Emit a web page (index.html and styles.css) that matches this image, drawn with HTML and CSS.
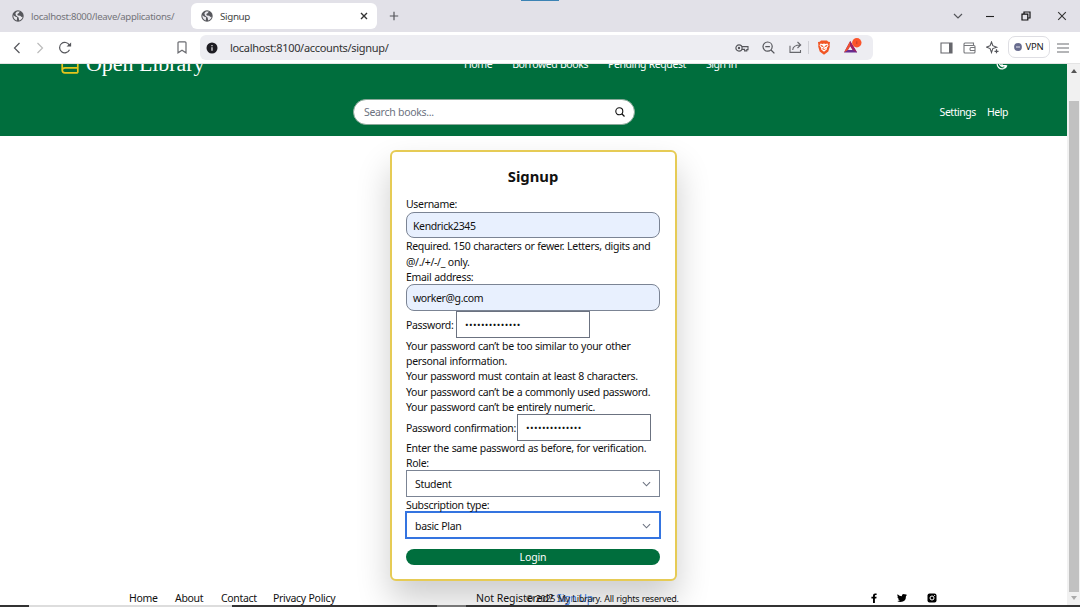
FILE: index.html
```html
<!DOCTYPE html>
<html lang="en">
<head>
<meta charset="utf-8">
<title>Signup</title>
<link rel="stylesheet" href="styles.css">
</head>
<body>
<svg class="defs" width="0" height="0"><defs>
  <symbol id="globe" viewBox="0 0 12 12"><circle cx="6" cy="6" r="5.7" fill="#56575c"/><path d="M1.3 5.2 3.5 6.8 5.1 7.2 4.8 10.4C2.8 9.8 1.3 8 1.3 5.2ZM5 1.4 7.8 1.5 6.9 3 5.2 3.9 5.9 5.4 8.2 5.8 9.6 7.1 10.6 6.8C10.3 9 8.7 10.2 7.2 10.4L6.6 7.4 4 5.5 3.4 3.2Z" fill="#e8e7ec"/></symbol>
  <symbol id="chevron" viewBox="0 0 10 6"><path d="m1 1 4 4 4-4" fill="none" stroke="currentColor" stroke-width="1.2"/></symbol>
</defs></svg>
<div class="browser">
  <div class="tabs">
    <div class="tab"><svg class="globe"><use href="#globe"/></svg><span class="tab-muted">localhost:8000/leave/applications/</span></div>
    <div class="tab tab-active"><svg class="globe"><use href="#globe"/></svg><span class="tab-title">Signup</span>
      <svg class="tab-close" width="8" height="8" viewBox="0 0 8 8"><path d="m1 1 6 6M7 1 1 7" stroke="#333" stroke-width="1.4"/></svg></div>
    <svg class="plus" width="10" height="10" viewBox="0 0 10 10"><path d="M5 .8v8.4M.8 5h8.4" stroke="#55565b" stroke-width="1.2"/></svg>
    <div class="progress"></div>
    <div class="window-buttons">
      <svg width="10" height="6"><use href="#chevron"/></svg>
      <svg width="10" height="10" viewBox="0 0 10 10"><path d="M1 5.5h8" stroke="#222" stroke-width="1.1"/></svg>
      <svg width="10" height="10" viewBox="0 0 10 10"><path d="M1 3.2h5.8V9H1zM3 3V1h6v6H7" fill="none" stroke="#111" stroke-width="1.2"/></svg>
      <svg width="10" height="10" viewBox="0 0 10 10"><path d="m1.2 1.2 7.6 7.6m0-7.6L1.2 8.8" stroke="#333" stroke-width="1.1"/></svg>
    </div>
  </div>
  <div class="toolbar">
    <div class="nav-icons">
      <svg width="8" height="12" viewBox="0 0 8 12"><path d="M6.5 1 1.5 6l5 5" fill="none" stroke="#55565b" stroke-width="1.2"/></svg>
      <svg width="8" height="12" viewBox="0 0 8 12"><path d="m1.5 1 5 5-5 5" fill="none" stroke="#bbb" stroke-width="1.2"/></svg>
      <svg width="14" height="13" viewBox="0 0 14 13"><path d="M11.4 4.2A5.2 5.2 0 1 0 11.5 8.8" fill="none" stroke="#55565b" stroke-width="1.2"/><path d="M8.5 5.5h4.6V1.4z" fill="#55565b"/></svg>
    </div>
    <svg class="bookmark" width="10" height="13" viewBox="0 0 10 13"><path d="M1 1.8Q1 .8 2 .8h6q1 0 1 1v10L5 9.2 1 11.8z" fill="none" stroke="#6a6b70" stroke-width="1.2"/></svg>
    <div class="address">
      <svg width="12" height="12" viewBox="0 0 12 12"><circle cx="6" cy="6" r="5.5" fill="#1d1c22"/><path d="M6 5.3v3.4M6 3v1.3" stroke="#ededf2" stroke-width="1.2"/></svg>
      <span class="url">localhost:8100/accounts/signup/</span>
      <div class="address-actions">
        <svg width="14" height="10" viewBox="0 0 14 10"><circle cx="4" cy="5" r="3.1" fill="none" stroke="#55565b" stroke-width="1.2"/><circle cx="4" cy="5" r="1.2" fill="#55565b"/><path d="M7 3.6h6v3h-1.2v1.3H9.6V6.4H7" fill="none" stroke="#55565b" stroke-width="1.1"/></svg>
        <svg width="13" height="13" viewBox="0 0 13 13"><circle cx="5.6" cy="5.6" r="4.6" fill="none" stroke="#55565b" stroke-width="1.2"/><path d="M3.3 5.6h4.6M9 9l3.4 3.4" stroke="#55565b" stroke-width="1.3"/></svg>
        <svg width="13" height="13" viewBox="0 0 13 13"><path d="M1 4.8v6.6h10.5V9M3.7 9c.2-3.6 2.3-5 7.7-5M8.5 1l3.2 3-3.2 3" fill="none" stroke="#66676c" stroke-width="1.1"/></svg>
        <i class="divider"></i>
        <svg width="14" height="15" viewBox="0 0 14 15"><path d="M4 .6h6l1.2 1.2 1.8.2-.4 3 .2 1.5-1.5 5L7 14.7 2.7 11.5l-1.5-5L1.4 5 1 2l1.8-.2z" fill="#f15625"/><path d="m3.5 3.5 2 .4L7 3.6l1.5.3 2-.4 1 2-1.8 2.7.3 1L7 11.8 4 9.2l.3-1-1.8-2.7z" fill="#fff"/><path d="m3.8 5.2 2 .8-.5 1zm6.4 0-2 .8.5 1zM7 6.4v1.4l-1.5 1L7 9.7l1.5-.9" stroke="#f15625" fill="none" stroke-width=".8"/></svg>
        <svg width="19" height="16" viewBox="0 0 19 16"><path d="M7.2 3 1 14.500h13.100L7.200 3Zm0 5 2.500 4.100H4.900z" fill="#662d91" fill-rule="evenodd"/><path d="M7.200 3 1 14.500l3.900-2.400L7.200 8z" fill="#f05030"/><path d="M7.200 3v5l2.500 4.100 4.400 2.400z" fill="#9e1f63"/><circle cx="13.8" cy="4.8" r="4.7" fill="#fb542b"/><path d="M13.8 3.3v2.8" stroke="#c13d31" stroke-width="1"/></svg>
      </div>
    </div>
    <div class="toolbar-right">
      <svg width="13" height="12" viewBox="0 0 13 12"><path d="M1 1h11v10H1z" fill="none" stroke="#66676c" stroke-width="1.1"/><path d="M9 1h3v10H9z" fill="#66676c"/></svg>
      <svg width="13" height="12" viewBox="0 0 13 12"><path d="M10.5 3.5V1H2Q1 1 1 2v8q0 1 1 1h9q1 0 1-1V4.500q0-1-1-1H1M12 5.500H8q-1 0-1 1.600t1 1.400h4" fill="none" stroke="#77787c" stroke-width="1.1"/></svg>
      <svg width="13" height="13" viewBox="0 0 13 13"><path d="m5.500 1 1.300 3.700 3.900 1.500-3.900 1.400-1.300 3.900-1.400-3.900L.6 6.200l3.500-1.500z" fill="none" stroke="#55565b" stroke-width="1.100"/><path d="M10.500 8.300v4M8.500 10.300h4" stroke="#55565b" stroke-width="1.200"/></svg>
      <div class="vpn"><svg width="8" height="8" viewBox="0 0 8 8"><circle cx="4" cy="4" r="3.900" fill="#686c8e"/><path d="M2 4h4" stroke="#e4e4f0"/></svg><span>VPN</span></div>
      <svg width="12" height="10" viewBox="0 0 12 10"><path d="M0 1h12M0 5h12M0 9h12" stroke="#6b6c70" stroke-width="1.100"/></svg>
    </div>
  </div>
  <div class="viewport">
    <div class="page">
      <header class="header">
        <div class="header-top">
          <svg class="logo" width="18" height="20" viewBox="0 0 18 20"><path d="M16.800 18.800H4Q1.200 18.800 1.200 16V4Q1.200 1.200 4 1.200h12.800v12.600H4Q1.200 13.800 1.200 16.300M16.800 13.800v5" fill="none" stroke="#e5c51d" stroke-width="1.700"/></svg>
          <span class="brand">Open Library</span>
          <nav class="main-nav"><a>Home</a><a>Borrowed Books</a><a>Pending Request</a><a>Sign in</a></nav>
          <svg class="moon" width="12" height="12" viewBox="0 0 12 12"><path d="M4.500 1.200A5 5 0 1 0 10.900 7.500 4.200 4.200 0 0 1 4.500 1.200ZM6 5v2.500h4" fill="none" stroke="#fff" stroke-width="1.200"/></svg>
        </div>
        <div class="header-bottom">
          <div class="search"><span>Search books...</span><svg width="10" height="10" viewBox="0 0 10 10"><circle cx="4.300" cy="4.300" r="3.500" fill="none" stroke="#111" stroke-width="1.100"/><path d="m7 7 2.500 2.500" stroke="#111" stroke-width="1.200"/></svg></div>
          <div class="links"><a>Settings</a><a>Help</a></div>
        </div>
      </header>
      <main class="main">
        <form class="card">
          <h1>Signup</h1>
          <label>Username:</label>
          <div class="field">Kendrick2345</div>
          <p class="hint tall">Required. 150 characters or fewer. Letters, digits and<br>@/./+/-/_ only.</p>
          <label class="low">Email address:</label>
          <div class="field field-email">worker@g.com</div>
          <div class="row"><span class="row-label l1">Password:</span><div class="pass">••••••••••••••</div></div>
          <p class="hint rules">Your password can’t be too similar to your other<br>personal information.<br>Your password must contain at least 8 characters.<br>Your password can’t be a commonly used password.<br>Your password can’t be entirely numeric.</p>
          <div class="row"><span class="row-label l2">Password confirmation:</span><div class="pass">••••••••••••••</div></div>
          <p class="hint">Enter the same password as before, for verification.</p>
          <label class="role">Role:</label>
          <div class="select"><span>Student</span><svg width="9" height="6"><use href="#chevron"/></svg></div>
          <label class="low">Subscription type:</label>
          <div class="select focus"><span>basic Plan</span><svg width="9" height="6"><use href="#chevron"/></svg></div>
          <div class="login">Login</div>
        </form>
      </main>
      <footer class="footer">
        <nav class="foot-nav"><a class="f1">Home</a><a class="f2">About</a><a class="f3">Contact</a><a class="f4">Privacy Policy</a></nav>
        <div class="foot-mid"><span class="register">Not Registered? <a>Sign Up</a></span><span class="copyright">© 2025 My Library. All rights reserved.</span></div>
        <div class="social">
          <svg width="6" height="10" viewBox="0 0 6 10"><path d="M2 10V5.600H.4V3.800H2V2.500Q2 .4 4 .4h1.600v1.700H4.700q-.8 0-.8.800v.9h1.700l-.3 1.800H3.900V10z"/></svg>
          <svg width="10" height="10" viewBox="0 0 10 10"><path d="M.6 1.200q1.800 2 4.200 2Q4.700.9 6.800.9q.8 0 1.400.600L9.700.9 9 2.100l1-.2-1 1.200Q9 9 3.500 9 1.600 9 .2 8.100q1.600 0 2.700-.8-1.500-.2-1.900-1.500h.9Q.4 5.200.4 3.700l.8.200Q-.1 2.600.6 1.200z"/></svg>
          <svg width="10" height="10" viewBox="0 0 10 10"><rect x=".5" y=".5" width="9" height="9" rx="2"/><circle cx="5" cy="5" r="2" fill="none" stroke="#fff"/><circle cx="7.600" cy="2.500" r=".6" fill="#fff"/></svg>
        </div>
      </footer>
    </div>
    <div class="scrollbar"><b class="up"></b><i class="thumb"></i><b class="down"></b></div>
  </div>
  <div class="taskbar"><i></i><i></i><i></i><i></i></div>
</div>
</body>
</html>
```
FILE: styles.css
```css
* { box-sizing: border-box; }
body { margin: 0; font: 10.5px "Noto Sans", "Open Sans", sans-serif; letter-spacing: -.32px; word-spacing: .4px; color: #111; background: #fff; overflow: hidden; }
svg { display: block; flex: none; }
span, a, label { white-space: nowrap; }
.defs { position: absolute; }
.browser { width: 1080px; height: 607px; display: flex; flex-direction: column; }

.tabs { height: 32px; flex: none; background: #e2e1e8; display: flex; align-items: center; position: relative; }
.tab { width: 191px; padding-left: 12px; display: flex; align-items: center; }
.tab-active { width: 186px; height: 26px; padding: 0 9px 0 10px; background: #fff; border-radius: 6px; }
.globe { width: 12px; height: 12px; margin-right: 7px; }
.tab-muted { color: #74747a; font-size: 9.6px; letter-spacing: -.31px; }
.tab-title { font-size: 9.8px; color: #444; letter-spacing: -.35px; }
.tab-close { margin-left: auto; }
.plus { margin-left: 12px; }
.progress { position: absolute; left: 521px; top: 0; width: 38px; height: 1px; background: #3c83b4; }
.window-buttons { margin-left: auto; padding-right: 13px; display: flex; align-items: center; gap: 26px; color: #55565b; }
.window-buttons svg:first-child { margin-right: -4px; }

.toolbar { height: 32px; flex: none; display: flex; align-items: center; border-bottom: 1px solid #e4e4e4; }
.nav-icons { display: flex; align-items: center; gap: 15px; width: 176px; padding-left: 13px; }
.nav-icons svg:last-child { margin-left: -1px; }
.bookmark { margin: 0 14px 0 1px; }
.address { width: 673px; height: 25px; background: #ededf2; border-radius: 6px; padding: 0 11px 0 6px; margin-left: -1px; display: flex; align-items: center; }
.url { margin-left: 12px; font-size: 11px; color: #333; }
.address-actions { margin-left: auto; display: flex; align-items: center; gap: 13.5px; }
.divider { width: 1px; height: 13px; background: #cfcfd5; margin: 0 -6px 0 -7px; }
.address-actions svg:last-child { margin-bottom: 4px; margin-left: -1px; }
.toolbar-right { margin-left: auto; padding-right: 11px; display: flex; align-items: center; gap: 11px; }
.toolbar-right > svg:first-child { margin-right: -1px; }
.toolbar-right > svg:nth-child(3) { margin: 0 -2px 0 -1px; }
.vpn { width: 42px; height: 22px; border: 1px solid #dedee3; border-radius: 7px; display: flex; align-items: center; justify-content: center; gap: 3px; margin: -2px -4px 0 0; font-size: 9.5px; letter-spacing: -.2px; color: #222; }

.viewport { height: 541px; flex: none; display: flex; overflow: hidden; }
.page { width: 1067px; }
.header { height: 90px; margin-top: -18px; background: #006e3d; color: #fff; }
.header-top { height: 36px; margin-bottom: 18px; display: flex; align-items: center; }
.logo { margin: 0 7px 0 61px; }
.brand { width: 378px; font: 22px/26px "Liberation Serif", serif; margin-top: -1px; letter-spacing: -.05px; word-spacing: 0; }
.main-nav { display: flex; width: 532px; gap: 20px; margin-top: -1px; letter-spacing: -.42px; }
.header-bottom { height: 36px; padding: 0 59px 0 353px; display: flex; align-items: flex-start; }
.search { width: 282px; height: 26px; margin-top: -1px; background: #fff; border-radius: 13px; border: 1px solid #8ba99a; color: #6b7280; padding: 0 9px 0 10px; display: flex; align-items: center; justify-content: space-between; }
.links { margin-left: auto; display: flex; gap: 11px; padding-top: 5px; letter-spacing: -.45px; }

.main { height: 445px; padding: 14px 0 0 390px; }
.card { width: 287px; height: 431px; border: 2px solid #e6cb55; border-radius: 6px; padding: 0 15px 0 14px; background: #fff; box-shadow: 0 18px 34px #0003; }
h1 { margin: 0; padding-top: 13px; height: 45px; text-align: center; font-size: 14.8px; line-height: 22px; letter-spacing: 0; }
label { display: block; height: 15px; line-height: 15px; }
.low { line-height: 17px; }
.field { height: 26px; border: 1px solid #7b8494; border-radius: 8px; background: #e8f0fe; padding: 1px 6px 0; line-height: 24px; letter-spacing: -.38px; }
.field-email { height: 27px; }
.hint { margin: 0; line-height: 15.2px; white-space: nowrap; }
.tall { height: 31px; line-height: 15.5px; padding-top: 1px; }
.rules { height: 76px; padding-top: 1px; }
.row { height: 27px; display: flex; align-items: center; }
.pass { width: 134px; height: 27px; border: 1px solid #6b7280; padding-left: 8px; line-height: 25px; font-size: 9.5px; letter-spacing: .4px; }
.l1 { width: 50px; }
.l2 { width: 111px; }
.role { height: 14px; }
.select { height: 27px; border: 1px solid #7b8494; padding: 1px 8px 0 8px; display: flex; align-items: center; justify-content: space-between; color: #111; }
.select svg { color: #6b7280; }
.focus { height: 28px; margin: -1px -1px 0; border: 2px solid #3474e0; }
.login { height: 16px; margin-top: 10px; border-radius: 8px; background: #006e3d; color: #fff; text-align: center; line-height: 17px; letter-spacing: -.1px; }

.footer { height: 24px; display: flex; align-items: center; padding-left: 129px; margin-top: 5px; }
.foot-nav { display: flex; width: 347px; }
.f1 { width: 46px; } .f2 { width: 46px; } .f3 { width: 52px; }
.foot-mid { display: grid; width: 395px; align-items: center; }
.register, .copyright { grid-area: 1 / 1; }
.register { letter-spacing: -.1px; }
.register a { color: #3471d8; letter-spacing: -.3px; }
.copyright { padding-left: 50px; font-size: 9px; letter-spacing: -.27px; }
.social { display: flex; gap: 20px; align-items: center; }

.scrollbar { width: 13px; background: #f1f1f1; padding: 5px 2px 0; display: flex; flex-direction: column; align-items: center; }
.up, .down { flex: none; width: 0; height: 0; border: 3px solid transparent; }
.up { border-top: 0; border-bottom: 4px solid #555; }
.down { border-bottom: 0; border-top: 4px solid #aaa; margin-top: 4px; }
.thumb { width: 10px; height: 491px; margin-top: 28px; background: #c1c1c1; flex: none; }
.taskbar { height: 2px; display: flex; background: #333; }
.taskbar i { width: 29px; }
.taskbar i:nth-child(2) { width: 203px; background: #ddd; }
.taskbar i:nth-child(3) { width: 205px; }
.taskbar i:nth-child(4) { background: #777; }
```
